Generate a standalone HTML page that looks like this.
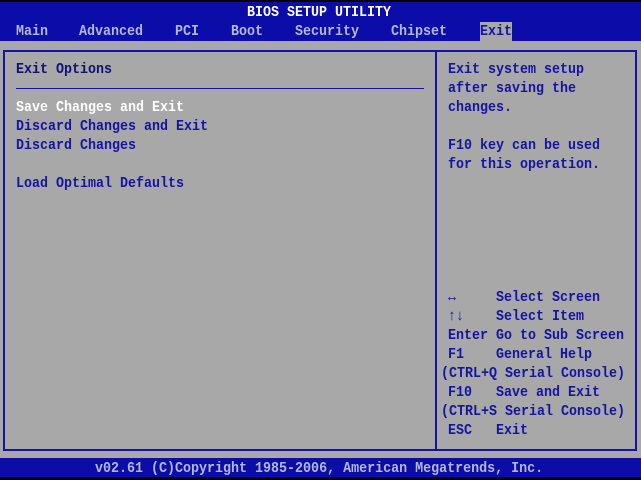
<!DOCTYPE html>
<html><head><meta charset="utf-8"><style>
html,body{margin:0;padding:0;}
body{width:641px;height:480px;position:relative;overflow:hidden;background:#a8a8a8;font-family:"Liberation Mono",monospace;font-weight:bold;font-size:15px;}
.a{position:absolute;white-space:pre;line-height:19px;height:19px;transform:scaleX(0.889);transform-origin:0 0;}
.blue{color:#1414a0}.w{color:#fff}.n{color:#101070}.m{color:#b4b8d8}
</style></head><body>
<div style="position:absolute;left:0;top:0;width:641px;height:2px;background:#000"></div>
<div style="position:absolute;left:0;top:2px;width:641px;height:39px;background:#0c0ca8"></div>
<div class="a w" style="left:247px;top:3px">BIOS SETUP UTILITY</div>
<div style="position:absolute;left:480px;top:22px;width:32px;height:19px;background:#a8a8a8"></div>
<div class="a m" style="left:16px;top:22px">Main</div>
<div class="a m" style="left:79px;top:22px">Advanced</div>
<div class="a m" style="left:175px;top:22px">PCI</div>
<div class="a m" style="left:231px;top:22px">Boot</div>
<div class="a m" style="left:295px;top:22px">Security</div>
<div class="a m" style="left:391px;top:22px">Chipset</div>
<div class="a blue" style="left:480px;top:22px">Exit</div>
<div style="position:absolute;left:3px;top:50px;width:630px;height:397px;border:2px solid #1414a0"></div>
<div style="position:absolute;left:435px;top:50px;width:2px;height:400px;background:#1414a0"></div>
<div style="position:absolute;left:16px;top:88px;width:408px;height:1px;background:#1414a0"></div>
<div class="a n" style="left:16px;top:60px">Exit Options</div>
<div class="a w" style="left:16px;top:98px">Save Changes and Exit</div>
<div class="a blue" style="left:16px;top:117px">Discard Changes and Exit</div>
<div class="a blue" style="left:16px;top:136px">Discard Changes</div>
<div class="a blue" style="left:16px;top:174px">Load Optimal Defaults</div>
<div class="a blue" style="left:448px;top:60px">Exit system setup</div>
<div class="a blue" style="left:448px;top:79px">after saving the</div>
<div class="a blue" style="left:448px;top:98px">changes.</div>
<div class="a blue" style="left:448px;top:136px">F10 key can be used</div>
<div class="a blue" style="left:448px;top:155px">for this operation.</div>
<div class="a blue" style="left:448px;top:288px">↔     Select Screen</div>
<div class="a blue" style="left:448px;top:307px">↑↓    Select Item</div>
<div class="a blue" style="left:448px;top:326px">Enter Go to Sub Screen</div>
<div class="a blue" style="left:448px;top:345px">F1    General Help</div>
<div class="a blue" style="left:441px;top:364px">(CTRL+Q Serial Console)</div>
<div class="a blue" style="left:448px;top:383px">F10   Save and Exit</div>
<div class="a blue" style="left:441px;top:402px">(CTRL+S Serial Console)</div>
<div class="a blue" style="left:448px;top:421px">ESC   Exit</div>
<div style="position:absolute;left:0;top:458px;width:641px;height:19px;background:#0c0ca8"></div>
<div style="position:absolute;left:0;top:477px;width:641px;height:3px;background:#000"></div>
<div class="a m" style="left:95px;top:459px">v02.61 (C)Copyright 1985-2006, American Megatrends, Inc.</div>
</body></html>
